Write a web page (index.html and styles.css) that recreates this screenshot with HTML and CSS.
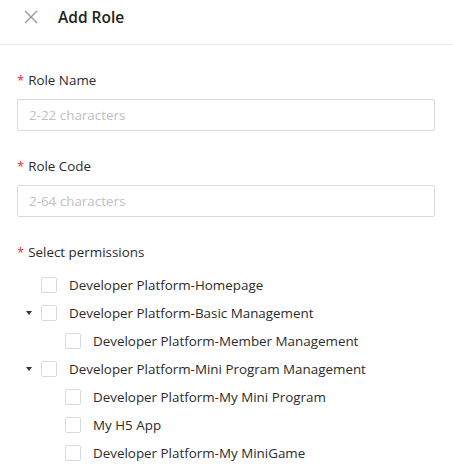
FILE: index.html
```html
<!DOCTYPE html>
<html>
<head>
<meta charset="utf-8">
<link rel="stylesheet" href="styles.css">
</head>
<body>
<div class="panel">
  <header class="header">
    <span class="close">
      <svg width="14" height="14" viewBox="0 0 14 14"><path d="M1 1 L13 13 M13 1 L1 13" stroke="#999" stroke-width="1.4" fill="none"/></svg>
    </span>
    <h1 class="title">Add Role</h1>
  </header>
  <main class="form">
    <div class="item">
      <label class="label"><span class="req">*</span>Role Name</label>
      <input class="input" placeholder="2-22 characters">
    </div>
    <div class="item">
      <label class="label"><span class="req">*</span>Role Code</label>
      <input class="input" placeholder="2-64 characters">
    </div>
    <div class="item last">
      <label class="label"><span class="req">*</span>Select permissions</label>
      <ul class="tree">
        <li class="node"><span class="switch"></span><span class="box"></span><span class="text">Developer Platform-Homepage</span></li>
        <li class="node"><span class="switch"><span class="caret"></span></span><span class="box"></span><span class="text">Developer Platform-Basic Management</span></li>
        <li class="node lvl1"><span class="switch"></span><span class="box"></span><span class="text">Developer Platform-Member Management</span></li>
        <li class="node"><span class="switch"><span class="caret"></span></span><span class="box"></span><span class="text">Developer Platform-Mini Program Management</span></li>
        <li class="node lvl1"><span class="switch"></span><span class="box"></span><span class="text">Developer Platform-My Mini Program</span></li>
        <li class="node lvl1"><span class="switch"></span><span class="box"></span><span class="text">My H5 App</span></li>
        <li class="node lvl1"><span class="switch"></span><span class="box"></span><span class="text">Developer Platform-My MiniGame</span></li>
      </ul>
    </div>
  </main>
</div>
</body>
</html>
```
FILE: styles.css
```css
* { box-sizing: border-box; }
html, body { margin: 0; padding: 0; background: #fff; }
body {
  font-family: "Open Sans", "Noto Sans", sans-serif;
  font-size: 13.4px;
  color: #2b2b2b;
}
.header {
  height: 45px;
  border-bottom: 1px solid #ebebeb;
  display: flex;
  align-items: center;
  padding-left: 24px;
}
.close { display: flex; width: 14px; height: 14px; margin-top: -10px; }
.title {
  margin: -10px 0 0 20px;
  font-size: 15.5px;
  font-weight: 600;
  color: #222;
}
.form { padding: 24px 18px 0 17px; }
.item { margin-bottom: 24px; }
.item.last { margin-bottom: 0; }
.label {
  display: block;
  line-height: 22px;
  margin-bottom: 8px;
}
.req { color: #f5222d; margin-right: 4px; font-size: 13px; margin-left: 0; }
.input {
  display: block;
  width: 100%;
  height: 32px;
  border: 1px solid #d9d9d9;
  border-radius: 2px;
  padding: 0 11px;
  font: inherit;
  color: #333;
  outline: none;
}
.input::placeholder { color: #bfbfbf; }
.tree { list-style: none; margin: 2px 0 0; padding: 0; }
.node { display: flex; align-items: center; height: 28px; }
.lvl1 { padding-left: 24px; }
.switch { width: 24px; height: 28px; display: flex; align-items: center; justify-content: center; }
.caret {
  width: 0; height: 0;
  border-left: 3.5px solid transparent;
  border-right: 3.5px solid transparent;
  border-top: 4px solid #333;
}
.box {
  width: 16px; height: 16px;
  border: 1px solid #d9d9d9;
  border-radius: 2px;
  margin-right: 12px;
}
.text { white-space: nowrap; }
```
